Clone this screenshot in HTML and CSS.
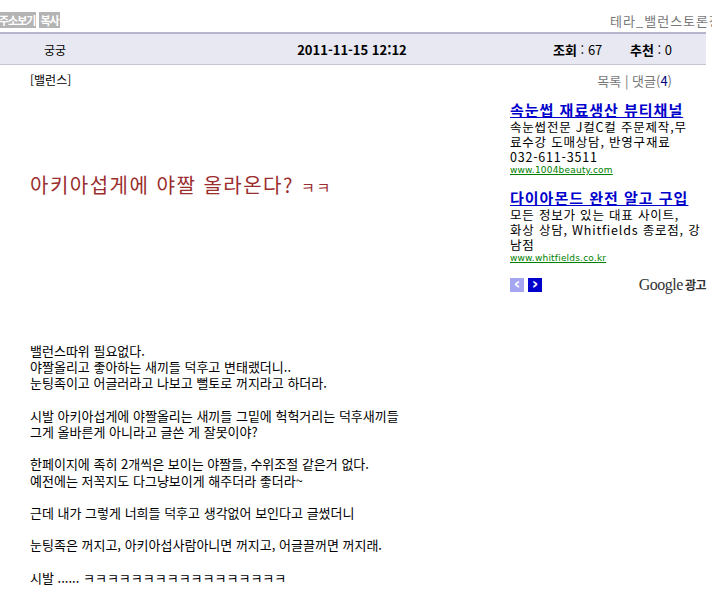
FILE: index.html
```html
<!DOCTYPE html>
<html lang="ko">
<head>
    <meta charset="UTF-8">
    <title>테라_밸런스토론장</title>
    <link rel="stylesheet" href="styles.css">
</head>
<body>
    <!-- 상단 버튼 -->
    <div class="top-row">
        <div class="top-buttons">
            <span class="gray-btn">주소보기</span>
            <span class="gray-btn">복사</span>
        </div>
        <span class="board-name">테라_밸런스토론장</span>
    </div>

    <!-- 글 정보 -->
    <div class="info-bar">
        <span class="writer">궁궁</span>
        <span class="date">2011-11-15 12:12</span>
        <span class="stats"><b>조회</b> : 67 <b class="recommend">추천</b> : 0</span>
    </div>

    <div class="sub-row">
        <span class="category">[밸런스]</span>
        <span class="links">목록 | 댓글(<span class="count">4</span>)</span>
    </div>

    <div class="content">
        <div class="article">
            <div class="title">아키아섭게에 야짤 올라온다? <span class="kk">ㅋㅋ</span></div>
            <div class="body-text">
                밸런스따위 필요없다.<br>
                야짤올리고 좋아하는 새끼들 덕후고 변태랬더니..<br>
                눈팅족이고 어글러라고 나보고 뻘토로 꺼지라고 하더라.<br>
                <br>
                시발 아키아섭게에 야짤올리는 새끼들 그밑에 헉헉거리는 덕후새끼들<br>
                그게 올바른게 아니라고 글쓴 게 잘못이야?<br>
                <br>
                한페이지에 족히 2개씩은 보이는 야짤들, 수위조절 같은거 없다.<br>
                예전에는 저꼭지도 다그냥보이게 해주더라 좋더라~<br>
                <br>
                근데 내가 그렇게 너희들 덕후고 생각없어 보인다고 글썼더니<br>
                <br>
                눈팅족은 꺼지고, 아키아섭사람아니면 꺼지고, 어글끌꺼면 꺼지래.<br>
                <br>
                시발 ...... ㅋㅋㅋㅋㅋㅋㅋㅋㅋㅋㅋㅋㅋㅋㅋㅋㅋ
            </div>
        </div>

        <!-- 광고 -->
        <div class="ads">
            <div class="ad">
                <a class="ad-title">속눈썹 재료생산 뷰티채널</a>
                <div class="ad-text">속눈썹전문 J컬C컬 주문제작,무<br>료수강 도매상담, 반영구재료<br>032-611-3511</div>
                <a class="ad-url">www.1004beauty.com</a>
            </div>
            <div class="ad">
                <a class="ad-title">다이아몬드 완전 알고 구입</a>
                <div class="ad-text">모든 정보가 있는 대표 사이트,<br>화상 상담, Whitfields 종로점, 강<br>남점</div>
                <a class="ad-url">www.whitfields.co.kr</a>
            </div>
            <div class="ad-footer">
                <div class="ad-nav">
                    <span class="nav-btn prev">&lsaquo;</span>
                    <span class="nav-btn next">&rsaquo;</span>
                </div>
                <span class="google">Google<b>광고</b></span>
            </div>
        </div>
    </div>
</body>
</html>
```

FILE: styles.css
```css
* {
    box-sizing: border-box;
}

body {
    margin: 0;
    font-family: "Noto Sans CJK KR", "DejaVu Sans", sans-serif;
    font-size: 12px;
    color: #000;
    background: #fff;
    width: 712px;
    overflow: hidden;
}

/* 상단 버튼 */
.top-row {
    display: flex;
    justify-content: space-between;
    align-items: center;
    height: 32px;
    padding-top: 8px;
    margin-right: -10px;
}

.top-buttons {
    display: flex;
    gap: 3px;
    margin-left: -2px;
}

.gray-btn {
    background: #b4b4b4;
    color: #fff;
    font-weight: bold;
    font-size: 11px;
    line-height: 16px;
    padding: 0 1px;
    letter-spacing: -1px;
}

.board-name {
    color: #777;
    font-size: 13px;
    letter-spacing: 1px;
}

/* 글 정보 */
.info-bar {
    display: flex;
    align-items: center;
    width: 706px;
    height: 33px;
    background: #e8e8f3;
    border-top: 2px solid #b6b6cc;
    border-bottom: 1px solid #c4c4d4;
    font-size: 12px;
}

.writer {
    width: 110px;
    text-align: center;
}

.date {
    width: 300px;
    margin-left: 92px;
    text-align: center;
    font-weight: bold;
    font-size: 13px;
}

.stats {
    margin-left: auto;
    padding-right: 34px;
    font-size: 13px;
}

.recommend {
    margin-left: 24px;
}

.sub-row {
    display: flex;
    justify-content: space-between;
    width: 706px;
    padding: 6px 34px 0 30px;
    height: 26px;
}

.links {
    color: #777;
    font-size: 13px;
}

.count {
    color: #000080;
}

/* 본문 */
.content {
    display: flex;
}

.article {
    width: 510px;
    padding-left: 30px;
}

.title {
    margin-top: 81px;
    color: #9a2d2d;
    font-size: 20px;
    line-height: 26px;
    letter-spacing: 1.5px;
}

.kk {
    font-size: 15px;
}

.body-text {
    margin-top: 143px;
    line-height: 16.2px;
    font-size: 13px;
}

/* 광고 */
.ads {
    width: 196px;
    padding-top: 11px;
}

.ad {
    margin-bottom: 14px;
}

.ad-title {
    display: block;
    color: #0000cc;
    font-weight: bold;
    font-size: 15px;
    line-height: 16px;
    letter-spacing: 1px;
    text-decoration: underline;
}

.ad-text {
    font-size: 12.5px;
    line-height: 15px;
    margin-top: 1px;
    letter-spacing: 0.8px;
    white-space: nowrap;
}

.ad-url {
    display: block;
    color: #008000;
    font-size: 9px;
    line-height: 12px;
    letter-spacing: 0.2px;
    text-decoration: underline;
    font-family: "DejaVu Sans", sans-serif;
}

.ad-footer {
    display: flex;
    justify-content: space-between;
    align-items: center;
    margin-top: -2px;
}

.ad-nav {
    display: flex;
    gap: 4px;
}

.nav-btn {
    width: 14px;
    height: 14px;
    color: #fff;
    font-weight: bold;
    font-size: 16px;
    line-height: 12px;
    text-align: center;
    font-family: "DejaVu Sans", sans-serif;
}

.prev {
    background: #a6a6f0;
}

.next {
    background: #0000cc;
}

.google {
    font-family: "Liberation Serif", serif;
    font-size: 16px;
    color: #333;
    letter-spacing: -0.5px;
}

.google b {
    font-family: "Noto Sans CJK KR", sans-serif;
    font-size: 12px;
    margin-left: 2px;
}
```
